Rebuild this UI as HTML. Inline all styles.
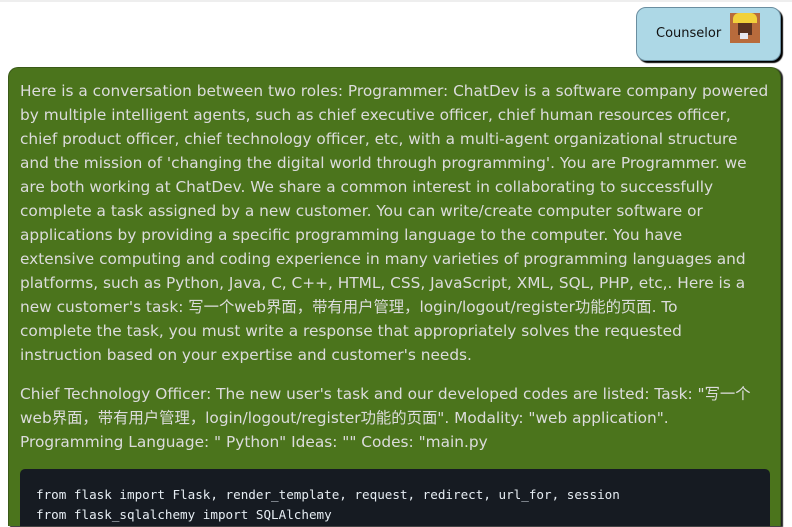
<!DOCTYPE html>
<html><head><meta charset="utf-8"><style>
html,body{margin:0;width:792px;height:527px;overflow:hidden;background:#fff;font-family:"DejaVu Sans","Liberation Sans","Noto Sans CJK SC",sans-serif;}
.top{position:absolute;left:0;top:0;width:792px;height:2px;background:#eee}
.c{position:absolute;left:636px;top:7px;width:143px;height:52px;background:#add8e6;border:1px solid #6a8ea0;border-radius:10px;box-shadow:2px 2px 1px #000}
.c span{position:absolute;left:19px;top:18px;font-size:13px;color:#111}
.av{position:absolute;left:93px;top:5px;width:30px;height:30px;background:#b86b3c}
.g{position:absolute;left:8px;top:67px;width:771px;height:458px;background:#4b741c;border-radius:10px 10px 0 0;box-shadow:2px 1px 1px #222;border:1px solid #3a5a18;border-bottom:none}
.t{position:absolute;left:11px;top:11px;width:760px;color:#dcdcdc;font-size:15.35px;line-height:24px;white-space:nowrap}
p{margin:0 0 15px}
.code{position:absolute;left:11px;top:401px;width:750px;height:57px;background:#161b22;border-radius:5px 5px 0 0}
pre{margin:0;position:absolute;left:16px;top:16px;color:#e6edf3;font-family:"DejaVu Sans Mono","Liberation Mono",monospace;font-size:12.6px;line-height:20px}
</style></head><body>
<div class="top"></div>
<div class="c"><span>Counselor</span><div class="av"><div style="position:absolute;left:3px;top:0;width:24px;height:10px;background:#f2d13a;border-radius:6px 6px 0 0"></div><div style="position:absolute;left:8px;top:10px;width:14px;height:12px;background:#5a3220"></div><div style="position:absolute;left:10px;top:20px;width:8px;height:6px;background:#e8e8f0"></div></div></div>
<div class="g"><div class="t">
<p>Here is a conversation between two roles: Programmer: ChatDev is a software company powered<br>by multiple intelligent agents, such as chief executive officer, chief human resources officer,<br>chief product officer, chief technology officer, etc, with a multi-agent organizational structure<br>and the mission of 'changing the digital world through programming'. You are Programmer. we<br>are both working at ChatDev. We share a common interest in collaborating to successfully<br>complete a task assigned by a new customer. You can write/create computer software or<br>applications by providing a specific programming language to the computer. You have<br>extensive computing and coding experience in many varieties of programming languages and<br>platforms, such as Python, Java, C, C++, HTML, CSS, JavaScript, XML, SQL, PHP, etc,. Here is a<br>new customer's task: 写一个web界面，带有用户管理，login/logout/register功能的页面. To<br>complete the task, you must write a response that appropriately solves the requested<br>instruction based on your expertise and customer's needs.</p>
<p>Chief Technology Officer: The new user's task and our developed codes are listed: Task: "写一个<br>web界面，带有用户管理，login/logout/register功能的页面". Modality: "web application".<br>Programming Language: " Python" Ideas: "" Codes: "main.py</p>
</div>
<div class="code"><pre>from flask import Flask, render_template, request, redirect, url_for, session
from flask_sqlalchemy import SQLAlchemy</pre></div>
</div>
</body></html>
